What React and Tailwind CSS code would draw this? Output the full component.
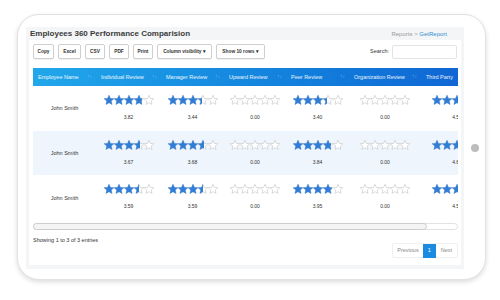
import React from "react";

const STAR = "M5 0.3l1.4 3.1 3.4.3-2.6 2.3.8 3.4L5 7.7 2 9.4l.8-3.4L.2 3.7l3.4-.3z";

function Stars({ v }) {
  const five = [0, 1, 2, 3, 4];
  return (
    <div className="relative w-[50px] h-[10px]">
      <div className="flex">
        {five.map((i) => (
          <svg key={i} width="10" height="10" viewBox="0 0 10 10">
            <path d={STAR} fill="#ffffff" stroke="#c4c4c4" strokeWidth="0.6" />
          </svg>
        ))}
      </div>
      <div className="absolute left-0 top-0 h-full overflow-hidden" style={{ width: `${(v / 5) * 100}%` }}>
        <div className="flex w-[50px]">
          {five.map((i) => (
            <svg key={i} width="10" height="10" viewBox="0 0 10 10" className="shrink-0">
              <path d={STAR} fill="#2f7dd6" stroke="#2f7dd6" strokeWidth="0.4" />
            </svg>
          ))}
        </div>
      </div>
    </div>
  );
}

const cols = [
  { label: "Employee Name", w: "w-[63px]" },
  { label: "Individual Review", w: "w-[65px]" },
  { label: "Manager Review", w: "w-[63px]" },
  { label: "Upward Review", w: "w-[62px]" },
  { label: "Peer Review", w: "w-[63px]" },
  { label: "Organization Review", w: "w-[72px]" },
  { label: "Third Party", w: "w-[72px]" },
];

const rows = [
  [3.82, 3.44, 0, 3.4, 0, 4.52],
  [3.67, 3.68, 0, 3.84, 0, 4.61],
  [3.59, 3.59, 0, 3.95, 0, 4.55],
];

const buttons = [
  { t: "Copy", w: "w-[21px]" },
  { t: "Excel", w: "w-[23px]" },
  { t: "CSV", w: "w-[20px]" },
  { t: "PDF", w: "w-[20px]" },
  { t: "Print", w: "w-[20px]" },
  { t: "Column visibility ▾", w: "w-[55px]" },
  { t: "Show 10 rows ▾", w: "w-[49px]" },
];

export default function App() {
  return (
    <div className="w-[500px] h-[300px] bg-white overflow-hidden font-['Liberation_Sans',Arial,sans-serif] text-[#333]">
      <div className="ml-[17px] mt-[14px] w-[469px] h-[266px] rounded-[22px] border border-[#e2e2e2] bg-white shadow-[0_2px_5px_rgba(0,0,0,0.14)] flex pl-[8px] pt-[12px] pb-[10px]">
        {/* screen */}
        <div className="w-[438px] h-full bg-[#f4f5f7] flex flex-col px-[3px]">
          <div className="h-[13px] flex items-center justify-between px-[1px] pr-[14px]">
            <div className="text-[8px] font-bold text-[#3a3a3a] leading-none">Employees 360 Performance Comparision</div>
            <div className="text-[6px] leading-none text-[#999]">
              Reports &gt; <span className="text-[#2f8fd0]">GetReport</span>
            </div>
          </div>
          <div className="flex-1 bg-white px-[4px] pt-[4px] flex flex-col">
            {/* buttons row */}
            <div className="flex items-center justify-between h-[15px]">
              <div className="flex gap-[4px] h-full">
                {buttons.map((b) => (
                  <div
                    key={b.t}
                    className={`${b.w} h-full border border-[#cfcfcf] rounded-[2px] bg-white shadow-[0_1px_1px_rgba(0,0,0,0.06)] flex items-center justify-center text-[4.8px] font-bold text-[#333] whitespace-nowrap`}
                  >
                    {b.t}
                  </div>
                ))}
              </div>
              <div className="flex items-center gap-[3px]">
                <span className="text-[5.5px] text-[#333]">Search:</span>
                <div className="w-[65px] h-[14px] border border-[#e3e3e3] rounded-[2px] bg-white" />
              </div>
            </div>
            {/* table */}
            <div className="mt-[9px] w-[425px] overflow-hidden">
              <div className="flex h-[18px] bg-gradient-to-r from-[#22a7ea] to-[#1161d2] w-max">
                {cols.map((c) => (
                  <div key={c.label} className={`${c.w} shrink-0 flex items-center justify-between pl-[5px] pr-[4px] text-[5.5px] text-white/90 whitespace-nowrap`}>
                    <span>{c.label}</span>
                    <span className="text-white/40 text-[5px]">↑↓</span>
                  </div>
                ))}
              </div>
              {rows.map((r, ri) => (
                <div key={ri} className={`flex h-[44.7px] w-max ${ri === 1 ? "bg-[#eef5fc]" : "bg-white"}`}>
                  <div className="w-[63px] shrink-0 flex items-center justify-center text-[5.5px] text-[#333]">John Smith</div>
                  {r.map((v, ci) => (
                    <div key={ci} className={`${cols[ci + 1].w} shrink-0 flex flex-col items-center pt-[9px]`}>
                      <Stars v={v} />
                      <div className="mt-[9px] text-[5px] leading-[7px] text-[#333]">{v.toFixed(2)}</div>
                    </div>
                  ))}
                </div>
              ))}
            </div>
            {/* scrollbar */}
            <div className="mt-[3px] w-[425px] h-[7px] rounded-full border border-[#e2e2e2] bg-white relative">
              <div className="absolute left-[-1px] top-[-1px] w-[394px] h-[7px] rounded-full border-[1.5px] border-[#cdcdcd] bg-[#f4f4f4]" />
            </div>
            {/* footer */}
            <div className="flex justify-between w-[425px]">
              <div className="mt-[6px] text-[5.5px] text-[#333]">Showing 1 to 3 of 3 entries</div>
              <div className="mt-[13px] h-[15px] flex items-center border border-[#f0f0f0] rounded-[2px] text-[5.5px]">
                <div className="px-[4px] text-[#888]">Previous</div>
                <div className="w-[13px] h-[14px] bg-[#1a8be0] text-white flex items-center justify-center">1</div>
                <div className="px-[5px] text-[#888]">Next</div>
              </div>
            </div>
          </div>
          <div className="h-[4px]" />
        </div>
        {/* home button */}
        <div className="flex-1 flex items-center justify-center">
          <div className="w-[8px] h-[8px] rounded-full bg-[#bdbdbd]" />
        </div>
      </div>
    </div>
  );
}
